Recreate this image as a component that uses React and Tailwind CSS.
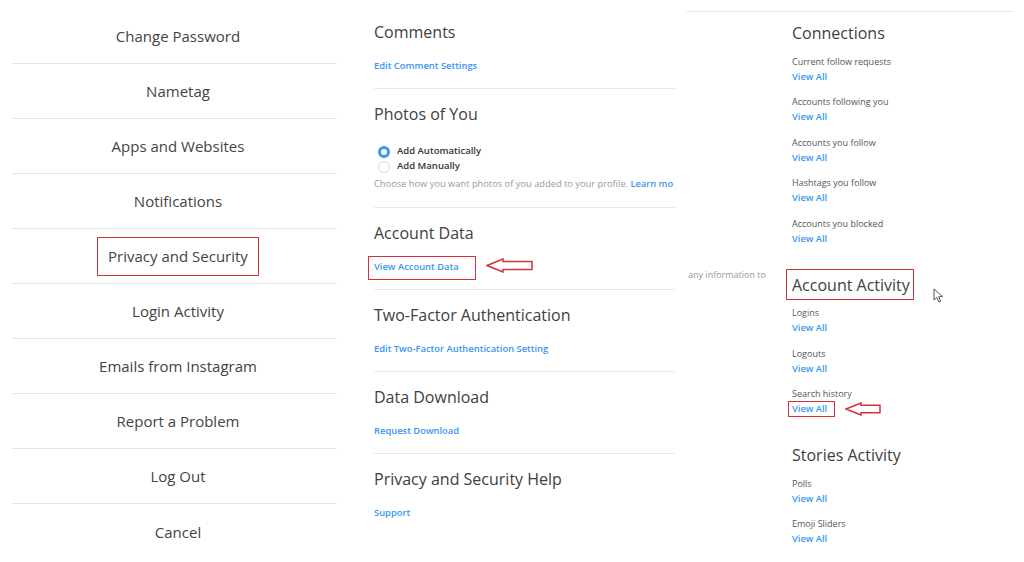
import React from "react";

const font = { fontFamily: '"Open Sans", "Noto Sans", sans-serif' };

const menu = [
  "Change Password",
  "Nametag",
  "Apps and Websites",
  "Notifications",
  "Privacy and Security",
  "Login Activity",
  "Emails from Instagram",
  "Report a Problem",
  "Log Out",
  "Cancel",
];

// Outlined red annotation arrow pointing left
function Arrow({ w, h }) {
  const head = Math.round(h * 1.15);
  const m = h / 2;
  const t = h * 0.26;
  return (
    <svg width={w} height={h} viewBox={`0 0 ${w} ${h}`}>
      <polygon
        points={`1,${m} ${head},1 ${head},${m - t} ${w - 1},${m - t} ${w - 1},${m + t} ${head},${m + t} ${head},${h - 1}`}
        fill="white"
        stroke="#d2323c"
        strokeWidth="1.5"
      />
    </svg>
  );
}

function Section({ title, link, last, children }) {
  return (
    <div className={`pt-[13px] ${last ? "" : "pb-[15px] border-b border-[#e8e8e8]"}`}>
      <h2 className="text-[16px] leading-[24px] text-[#404040]">{title}</h2>
      {children || (
        <a className="block mt-[15px] text-[9.4px] leading-[14px] font-semibold text-[#3897f0]">{link}</a>
      )}
    </div>
  );
}

function Item({ label, boxed }) {
  return (
    <div>
      <p className="text-[9px] leading-[15px] text-[#555]">{label}</p>
      <div className="relative">
        <a className="block text-[9.3px] leading-[15px] font-semibold text-[#3897f0]">View All</a>
        {boxed && (
          <>
            <span className="absolute left-[-4px] top-[-0.5px] w-[47px] h-[16px] border-[1.5px] border-solid border-[color:#d2323c]" />
            <span className="absolute left-[53px] top-[1px]">
              <Arrow w={36} h={14} />
            </span>
          </>
        )}
      </div>
    </div>
  );
}

function Group({ title, items, boxedTitle, boxedItem }) {
  return (
    <div>
      <div className="relative">
        <h2 className="text-[16px] leading-[22px] text-[#404040]">{title}</h2>
        {boxedTitle && (
          <span className="absolute left-[-6px] top-[-5px] w-[128px] h-[31px] border-[1.5px] border-solid border-[color:#d2323c]" />
        )}
      </div>
      <div className="mt-[9.5px] flex flex-col gap-[10.5px]">
        {items.map((it) => (
          <Item key={it} label={it} boxed={it === boxedItem} />
        ))}
      </div>
    </div>
  );
}

export default function App() {
  return (
    <div className="w-[1024px] h-[562px] bg-white flex overflow-hidden" style={font}>
      {/* Settings menu */}
      <div className="w-[355px] shrink-0 pl-[12px] pr-[18px] pt-[9px]">
        {menu.map((m, i) => (
          <div
            key={m}
            className={`h-[55px] flex items-center justify-center pl-[7px] pt-[1px] ${i < menu.length - 1 ? "border-b border-[#e3e3e3]" : ""}`}
          >
            {m === "Privacy and Security" ? (
              <span className="px-[10px] h-[39px] mt-[-1px] flex items-center border-[1.5px] border-solid border-[color:#d2323c]">
                <span className="text-[15px] text-[#444] pt-[1px]">{m}</span>
              </span>
            ) : (
              <span className="text-[15px] text-[#444]">{m}</span>
            )}
          </div>
        ))}
      </div>

      {/* Privacy and security page */}
      <div className="w-[331px] shrink-0 pl-[19px]">
        <div className="w-[301px] pt-[7px]">
          <Section title="Comments" link="Edit Comment Settings" />
          <Section title="Photos of You">
            <div className="mt-[18px]">
              <label className="flex items-center h-[15px] gap-[7px] pl-[4px] text-[9.5px] font-semibold text-[#333]">
                <span className="w-[12px] h-[12px] rounded-full border-[3.5px] border-[#3897f0] bg-white" />
                Add Automatically
              </label>
              <label className="flex items-center h-[15px] gap-[7px] pl-[4px] text-[9.5px] font-semibold text-[#333]">
                <span className="w-[12px] h-[12px] rounded-full border border-[#d8d8d8] bg-white" />
                Add Manually
              </label>
              <p className="mt-[2px] h-[16px] leading-[16px] text-[9.3px] text-[#999] whitespace-nowrap overflow-hidden">
                Choose how you want photos of you added to your profile.{" "}
                <span className="font-semibold text-[#3897f0]">Learn mo</span>
              </p>
            </div>
          </Section>
          <Section title="Account Data">
            <div className="relative mt-[15px] h-[14px]">
              <a className="block text-[9.4px] leading-[14px] font-semibold text-[#3897f0]">View Account Data</a>
              <span className="absolute left-[-6px] top-[-4px] w-[108px] h-[24px] border-[1.5px] border-solid border-[color:#d2323c]" />
              <span className="absolute left-[112px] top-[-2px]">
                <Arrow w={47} h={15} />
              </span>
            </div>
          </Section>
          <Section title="Two-Factor Authentication" link="Edit Two-Factor Authentication Setting" />
          <Section title="Data Download" link="Request Download" />
          <Section title="Privacy and Security Help" link="Support" last />
        </div>
      </div>

      {/* Access data page */}
      <div className="flex-1 pt-[11px]">
        <div className="w-[328px] h-px bg-[#e8e8e8]" />
        <div className="flex">
          <div className="w-[106px] shrink-0 relative">
            <p className="absolute left-[2px] top-[256px] whitespace-nowrap text-[9px] leading-[14px] text-[#999]">
              any information to
            </p>
          </div>
          <div className="relative pt-[10px] flex flex-col gap-[28px]">
            <Group
              title="Connections"
              items={[
                "Current follow requests",
                "Accounts following you",
                "Accounts you follow",
                "Hashtags you follow",
                "Accounts you blocked",
              ]}
            />
            <Group title="Account Activity" items={["Logins", "Logouts", "Search history"]} boxedTitle boxedItem="Search history" />
            <Group title="Stories Activity" items={["Polls", "Emoji Sliders"]} />
            {/* mouse cursor */}
            <svg className="absolute left-[141px] top-[276px]" width="11" height="15" viewBox="0 0 11 15">
              <path d="M1 1 L1 12 L3.8 9.4 L5.8 14 L7.6 13.2 L5.7 8.7 L9.6 8.7 Z" fill="white" stroke="#555" strokeWidth="1" strokeLinejoin="round" />
            </svg>
          </div>
        </div>
      </div>
    </div>
  );
}
